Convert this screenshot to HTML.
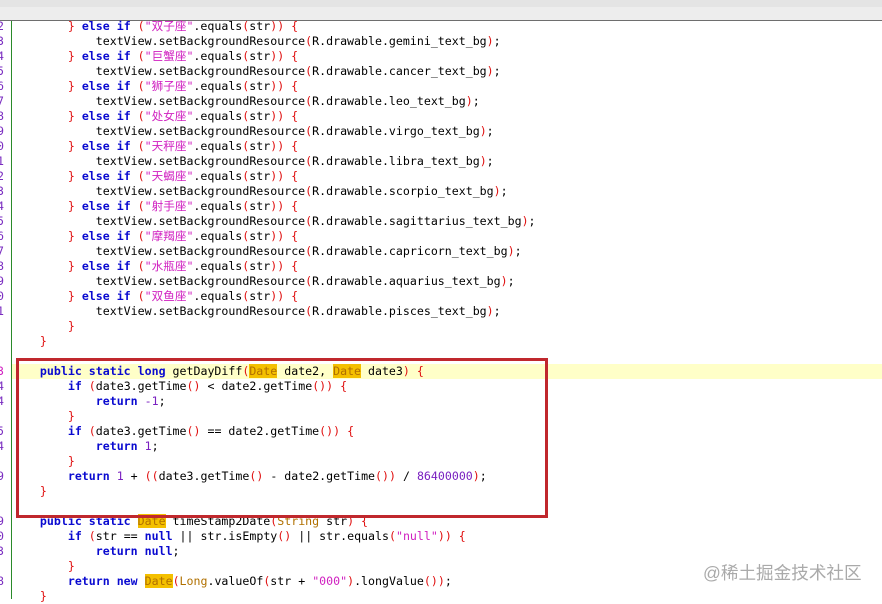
<!DOCTYPE html>
<html><head><meta charset="utf-8"><style>
body{margin:0;width:882px;height:599px;overflow:hidden;background:#fff;position:relative;font-family:"DejaVu Sans Mono","Noto Sans CJK SC",monospace;}
.tb1{position:absolute;left:0;top:0;width:882px;height:7px;background:#e4e4e4}
.tb2{position:absolute;left:0;top:7px;width:882px;height:13px;background:#ededed}
.tb3{position:absolute;left:0;top:20px;width:882px;height:1px;background:#6e6e6e}
.gut{position:absolute;left:11px;top:21px;width:1px;height:578px;background:#2a8a2a}
.hl{position:absolute;left:12px;top:364px;width:870px;height:15px;background:#ffffc8}
.l{position:absolute;left:12px;height:15px;line-height:15px;font-size:11.6px;white-space:pre;color:#000}
.n{position:absolute;left:-3px;height:15px;line-height:15px;font-size:11.6px;color:#7a2cc0}
.k{color:#0a0ad0;font-weight:bold}
.p{color:#e01010}
.s{color:#d020c0}
.d{color:#7a20c0}
.t{background:#f4c000;color:#b07000}
.c{font-family:"Noto Sans CJK SC",sans-serif;font-size:11.6px}
.box{position:absolute;left:16px;top:358px;width:526px;height:154px;border:3px solid #c0282d}
.wm{position:absolute;left:703px;top:560px;font-family:"Liberation Sans","Noto Sans CJK SC",sans-serif;font-size:17.6px;color:#aaa;white-space:nowrap}
</style></head><body>
<div class="tb1"></div><div class="tb2"></div><div class="tb3"></div><div class="gut"></div>
<div class="hl"></div>

<div class="n" style="top:19px">2</div><div class="n" style="top:34px">3</div><div class="n" style="top:49px">4</div><div class="n" style="top:64px">5</div><div class="n" style="top:79px">6</div><div class="n" style="top:94px">7</div><div class="n" style="top:109px">8</div><div class="n" style="top:124px">9</div><div class="n" style="top:139px">0</div><div class="n" style="top:154px">1</div><div class="n" style="top:169px">2</div><div class="n" style="top:184px">3</div><div class="n" style="top:199px">4</div><div class="n" style="top:214px">5</div><div class="n" style="top:229px">6</div><div class="n" style="top:244px">7</div><div class="n" style="top:259px">8</div><div class="n" style="top:274px">9</div><div class="n" style="top:289px">0</div><div class="n" style="top:304px">1</div>
<div class="n" style="top:364px;color:#d020c0">3</div><div class="n" style="top:379px">4</div><div class="n" style="top:394px">4</div><div class="n" style="top:424px">5</div><div class="n" style="top:439px">4</div><div class="n" style="top:469px">9</div><div class="n" style="top:514px">9</div><div class="n" style="top:529px">0</div><div class="n" style="top:544px">3</div><div class="n" style="top:574px">8</div>

<div class="l" style="top:19px">        <span class="p">}</span> <span class="k">else if</span> <span class="p">(</span><span class="s">"<span class="c">双子座</span>"</span>.equals<span class="p">(</span>str<span class="p">)) {</span></div>
<div class="l" style="top:34px">            textView.setBackgroundResource<span class="p">(</span>R.drawable.gemini_text_bg<span class="p">)</span>;</div>
<div class="l" style="top:49px">        <span class="p">}</span> <span class="k">else if</span> <span class="p">(</span><span class="s">"<span class="c">巨蟹座</span>"</span>.equals<span class="p">(</span>str<span class="p">)) {</span></div>
<div class="l" style="top:64px">            textView.setBackgroundResource<span class="p">(</span>R.drawable.cancer_text_bg<span class="p">)</span>;</div>
<div class="l" style="top:79px">        <span class="p">}</span> <span class="k">else if</span> <span class="p">(</span><span class="s">"<span class="c">狮子座</span>"</span>.equals<span class="p">(</span>str<span class="p">)) {</span></div>
<div class="l" style="top:94px">            textView.setBackgroundResource<span class="p">(</span>R.drawable.leo_text_bg<span class="p">)</span>;</div>
<div class="l" style="top:109px">        <span class="p">}</span> <span class="k">else if</span> <span class="p">(</span><span class="s">"<span class="c">处女座</span>"</span>.equals<span class="p">(</span>str<span class="p">)) {</span></div>
<div class="l" style="top:124px">            textView.setBackgroundResource<span class="p">(</span>R.drawable.virgo_text_bg<span class="p">)</span>;</div>
<div class="l" style="top:139px">        <span class="p">}</span> <span class="k">else if</span> <span class="p">(</span><span class="s">"<span class="c">天秤座</span>"</span>.equals<span class="p">(</span>str<span class="p">)) {</span></div>
<div class="l" style="top:154px">            textView.setBackgroundResource<span class="p">(</span>R.drawable.libra_text_bg<span class="p">)</span>;</div>
<div class="l" style="top:169px">        <span class="p">}</span> <span class="k">else if</span> <span class="p">(</span><span class="s">"<span class="c">天蝎座</span>"</span>.equals<span class="p">(</span>str<span class="p">)) {</span></div>
<div class="l" style="top:184px">            textView.setBackgroundResource<span class="p">(</span>R.drawable.scorpio_text_bg<span class="p">)</span>;</div>
<div class="l" style="top:199px">        <span class="p">}</span> <span class="k">else if</span> <span class="p">(</span><span class="s">"<span class="c">射手座</span>"</span>.equals<span class="p">(</span>str<span class="p">)) {</span></div>
<div class="l" style="top:214px">            textView.setBackgroundResource<span class="p">(</span>R.drawable.sagittarius_text_bg<span class="p">)</span>;</div>
<div class="l" style="top:229px">        <span class="p">}</span> <span class="k">else if</span> <span class="p">(</span><span class="s">"<span class="c">摩羯座</span>"</span>.equals<span class="p">(</span>str<span class="p">)) {</span></div>
<div class="l" style="top:244px">            textView.setBackgroundResource<span class="p">(</span>R.drawable.capricorn_text_bg<span class="p">)</span>;</div>
<div class="l" style="top:259px">        <span class="p">}</span> <span class="k">else if</span> <span class="p">(</span><span class="s">"<span class="c">水瓶座</span>"</span>.equals<span class="p">(</span>str<span class="p">)) {</span></div>
<div class="l" style="top:274px">            textView.setBackgroundResource<span class="p">(</span>R.drawable.aquarius_text_bg<span class="p">)</span>;</div>
<div class="l" style="top:289px">        <span class="p">}</span> <span class="k">else if</span> <span class="p">(</span><span class="s">"<span class="c">双鱼座</span>"</span>.equals<span class="p">(</span>str<span class="p">)) {</span></div>
<div class="l" style="top:304px">            textView.setBackgroundResource<span class="p">(</span>R.drawable.pisces_text_bg<span class="p">)</span>;</div>
<div class="l" style="top:319px">        <span class="p">}</span></div>
<div class="l" style="top:334px">    <span class="p">}</span></div>

<div class="l" style="top:364px">    <span class="k">public static long</span> getDayDiff<span class="p">(</span><span class="t">Date</span> date2, <span class="t">Date</span> date3<span class="p">) {</span></div>
<div class="l" style="top:379px">        <span class="k">if</span> <span class="p">(</span>date3.getTime<span class="p">()</span> &lt; date2.getTime<span class="p">()) {</span></div>
<div class="l" style="top:394px">            <span class="k">return</span> <span class="d">-1</span>;</div>
<div class="l" style="top:409px">        <span class="p">}</span></div>
<div class="l" style="top:424px">        <span class="k">if</span> <span class="p">(</span>date3.getTime<span class="p">()</span> == date2.getTime<span class="p">()) {</span></div>
<div class="l" style="top:439px">            <span class="k">return</span> <span class="d">1</span>;</div>
<div class="l" style="top:454px">        <span class="p">}</span></div>
<div class="l" style="top:469px">        <span class="k">return</span> <span class="d">1</span> + <span class="p">((</span>date3.getTime<span class="p">()</span> - date2.getTime<span class="p">())</span> / <span class="d">86400000</span><span class="p">)</span>;</div>
<div class="l" style="top:484px">    <span class="p">}</span></div>

<div class="l" style="top:514px">    <span class="k">public static</span> <span class="t">Date</span> timeStamp2Date<span class="p">(</span><span style="color:#b07000">String</span> str<span class="p">) {</span></div>
<div class="l" style="top:529px">        <span class="k">if</span> <span class="p">(</span>str == <span class="k">null</span> || str.isEmpty<span class="p">()</span> || str.equals<span class="p">(</span><span class="s">"null"</span><span class="p">)) {</span></div>
<div class="l" style="top:544px">            <span class="k">return null</span>;</div>
<div class="l" style="top:559px">        <span class="p">}</span></div>
<div class="l" style="top:574px">        <span class="k">return new</span> <span class="t">Date</span><span class="p">(</span><span style="color:#b07000">Long</span>.valueOf<span class="p">(</span>str + <span class="s">"000"</span><span class="p">)</span>.longValue<span class="p">())</span>;</div>
<div class="l" style="top:589px">    <span class="p">}</span></div>

<div class="box"></div>
<div class="wm">@稀土掘金技术社区</div>
</body></html>
